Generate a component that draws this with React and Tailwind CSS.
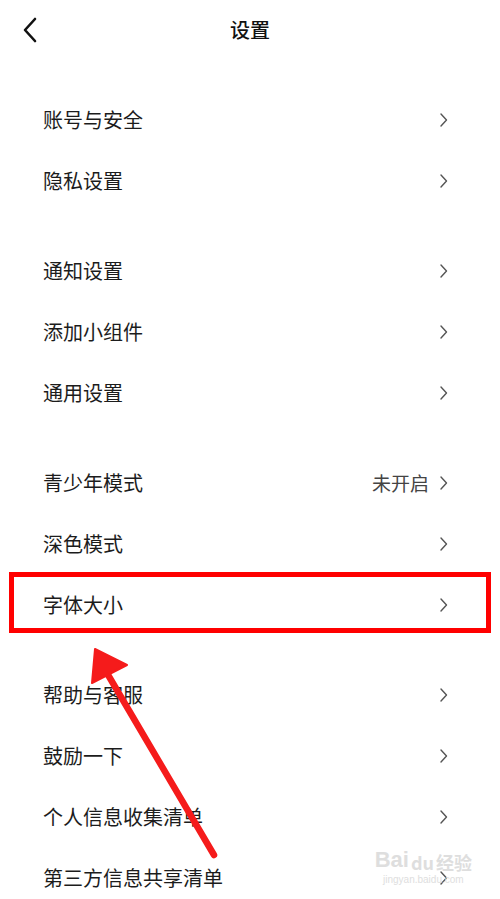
import React from 'react';

const groups = [
  [{ label: '账号与安全' }, { label: '隐私设置' }],
  [{ label: '通知设置' }, { label: '添加小组件' }, { label: '通用设置' }],
  [{ label: '青少年模式', value: '未开启' }, { label: '深色模式' }, { label: '字体大小', marked: true }],
  [{ label: '帮助与客服' }, { label: '鼓励一下' }, { label: '个人信息收集清单' }, { label: '第三方信息共享清单' }],
];

function Chevron() {
  return (
    <svg width="9" height="16" viewBox="0 0 9 16" className="shrink-0">
      <path d="M2 2 L7.5 8 L2 14" fill="none" stroke="#555" strokeWidth="1.4" strokeLinecap="round" strokeLinejoin="round" />
    </svg>
  );
}

function Row({ item }) {
  return (
    <div className="relative h-[61px] flex items-center pl-[43px] pr-[52px]">
      <span className="flex-1 text-[20px] text-[#1c1c1c] leading-none">{item.label}</span>
      {item.value && <span className="text-[19px] text-[#444] mr-[10px] leading-none">{item.value}</span>}
      <Chevron />
      {item.marked && (
        <div className="absolute left-[9px] right-[9px] top-[-2px] bottom-[2px] border-[5px] border-[#ff0000]" />
      )}
    </div>
  );
}

export default function App() {
  return (
    <div className="relative w-[500px] h-[899px] overflow-hidden bg-white" style={{ fontFamily: '"Noto Sans CJK SC", "Noto Sans", sans-serif' }}>
      <div className="relative h-[60px] flex items-center justify-center">
        <svg width="16" height="26" viewBox="0 0 16 26" className="absolute left-[22px] top-[17px]">
          <path d="M13 2 L3 13 L13 24" fill="none" stroke="#111" strokeWidth="2.6" strokeLinecap="round" strokeLinejoin="round" />
        </svg>
        <span className="text-[20px] font-medium text-[#111] leading-none">设置</span>
      </div>
      <div className="h-[29px]" />
      <div className="flex flex-col gap-[29px]">
        {groups.map((g, i) => (
          <div key={i} className="flex flex-col">
            {g.map((item) => (
              <Row key={item.label} item={item} />
            ))}
          </div>
        ))}
      </div>

      <div className="absolute right-[28px] bottom-[14px] flex flex-col items-center text-[#dedede] leading-none">
        <div className="flex items-end gap-[2px]">
          <span className="text-[22px] font-bold" style={{ fontFamily: '"Liberation Sans", sans-serif' }}>Bai</span>
          <span className="text-[18px] font-bold">du</span>
          <span className="text-[18px] font-bold">经验</span>
        </div>
        <span className="text-[10px] mt-[4px]" style={{ fontFamily: '"Liberation Sans", sans-serif' }}>jingyan.baidu.com</span>
      </div>

      <svg className="absolute left-0 top-0 pointer-events-none" width="500" height="899" viewBox="0 0 500 899">
        <line x1="214" y1="855" x2="104" y2="668" stroke="#f51b1b" strokeWidth="6.5" strokeLinecap="round" />
        <polygon points="95,649 127,665 92,683" fill="#f51b1b" stroke="#f51b1b" strokeWidth="2" strokeLinejoin="round" />
      </svg>
    </div>
  );
}
